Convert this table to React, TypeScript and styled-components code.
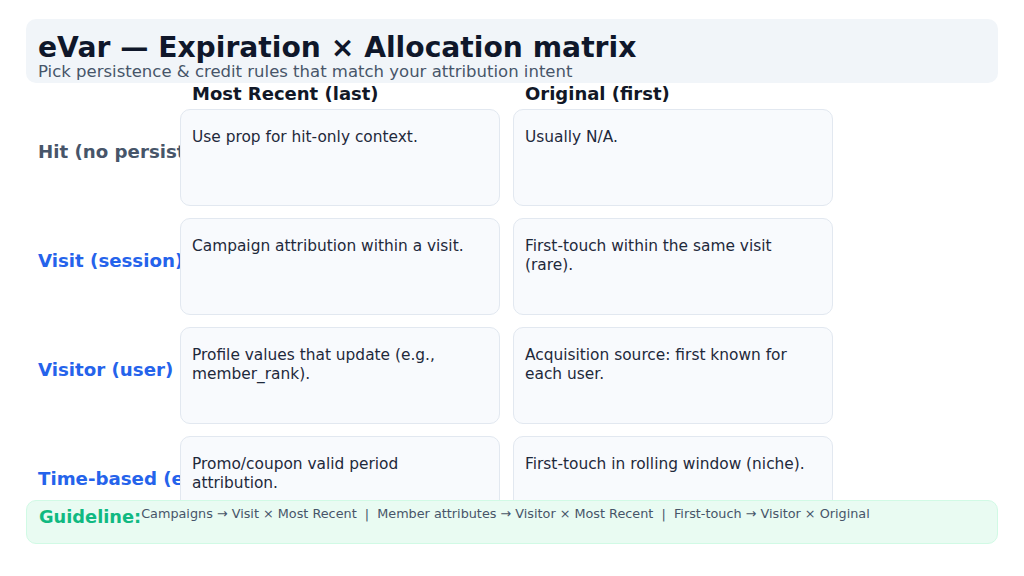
import React from "react";
import styled, { createGlobalStyle } from "styled-components";

const Global = createGlobalStyle`
  html, body { margin: 0; padding: 0; background: #ffffff; }
  body { font-family: "DejaVu Sans", "Liberation Sans", sans-serif; }
`;

const Page = styled.div`
  width: 1024px;
  height: 576px;
  box-sizing: border-box;
  padding: 19px 26px 32px;
  display: flex;
  flex-direction: column;
  overflow: hidden;
`;

const Header = styled.header`
  background: #f1f5f9;
  border-radius: 10px;
  padding: 15px 12px 2px;
  display: flex;
  flex-direction: column;
`;

const Title = styled.h1`
  margin: 0;
  font-size: 28.2px;
  line-height: 28px;
  font-weight: 700;
  color: #0f172a;
`;

const Subtitle = styled.p`
  margin: 0;
  font-size: 16.5px;
  line-height: 19px;
  color: #475569;
`;

const Matrix = styled.section`
  flex: 1;
  min-height: 0;
  display: flex;
  flex-direction: column;
  gap: 12px;
`;

const HeadRow = styled.div`
  display: flex;
  height: 21px;
  margin-bottom: -7px;
`;

const Spacer = styled.div`
  width: 154px;
  flex: none;
`;

const ColHead = styled.div`
  width: 320px;
  box-sizing: border-box;
  padding-left: 12px;
  font-size: 18px;
  font-weight: 700;
  line-height: 21px;
  color: #111827;
  & + & { margin-left: 13px; }
`;

const Row = styled.div`
  display: flex;
  align-items: center;
  flex: none;
`;

const Label = styled.div<{ $tone: "muted" | "accent" }>`
  width: 154px;
  flex: none;
  box-sizing: border-box;
  padding: 0 0 12px 12px;
  overflow: hidden;
  white-space: nowrap;
  font-size: 18.2px;
  font-weight: 700;
  color: ${(p) => (p.$tone === "muted" ? "#475569" : "#2563eb")};
`;

const Cells = styled.div`
  display: flex;
  gap: 13px;
`;

const Cell = styled.div`
  width: 320px;
  height: 97px;
  box-sizing: border-box;
  background: #f8fafd;
  border: 1px solid #e2e8f0;
  border-radius: 10px;
  padding: 18px 12px 12px 11px;
  font-size: 15.4px;
  line-height: 19px;
  color: #1e293b;
`;

const Footer = styled.footer`
  position: relative;
  z-index: 1;
  height: 44px;
  box-sizing: border-box;
  background: #e9fbf2;
  border: 1px solid #d1fae5;
  border-radius: 10px;
  padding: 5px 12px 4px;
  display: flex;
  align-items: flex-start;
`;

const FootLabel = styled.span`
  font-size: 17.8px;
  line-height: 22px;
  font-weight: 700;
  color: #10b981;
`;

const FootText = styled.span`
  font-size: 12.8px;
  line-height: 16px;
  color: #475569;
  white-space: pre;
`;

const rows = [
  { label: "Hit (no persistence)", tone: "muted" as const, recent: "Use prop for hit-only context.", original: "Usually N/A." },
  { label: "Visit (session)", tone: "accent" as const, recent: "Campaign attribution within a visit.", original: "First-touch within the same visit (rare)." },
  { label: "Visitor (user)", tone: "accent" as const, recent: "Profile values that update (e.g., member_rank).", original: "Acquisition source: first known for each user." },
  { label: "Time-based (e.g., 30 days)", tone: "accent" as const, recent: "Promo/coupon valid period attribution.", original: "First-touch in rolling window (niche)." },
];

export default function App() {
  return (
    <>
      <Global />
      <Page>
        <Header>
          <Title>eVar — Expiration × Allocation matrix</Title>
          <Subtitle>Pick persistence &amp; credit rules that match your attribution intent</Subtitle>
        </Header>
        <Matrix>
          <HeadRow>
            <Spacer />
            <ColHead>Most Recent (last)</ColHead>
            <ColHead>Original (first)</ColHead>
          </HeadRow>
          {rows.map((r) => (
            <Row key={r.label}>
              <Label $tone={r.tone}>{r.label}</Label>
              <Cells>
                <Cell>{r.recent}</Cell>
                <Cell>{r.original}</Cell>
              </Cells>
            </Row>
          ))}
        </Matrix>
        <Footer>
          <FootLabel>Guideline:</FootLabel>
          <FootText>{"Campaigns → Visit × Most Recent  |  Member attributes → Visitor × Most Recent  |  First-touch → Visitor × Original"}</FootText>
        </Footer>
      </Page>
    </>
  );
}
